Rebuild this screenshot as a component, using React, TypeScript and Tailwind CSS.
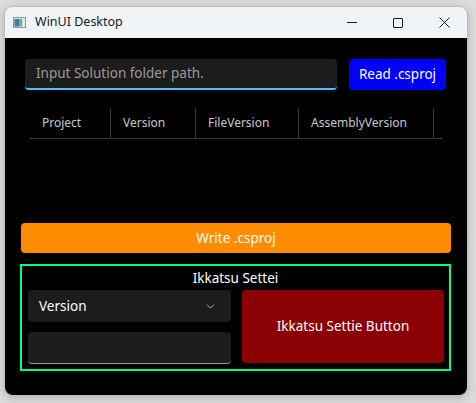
import { ChevronDown } from 'lucide-react'

const font = { fontFamily: '"Noto Sans", "Open Sans", sans-serif' }

export default function App(): JSX.Element {
  return (
    <div className="h-[403px] w-[476px] overflow-hidden bg-[#dcdcdc] pl-[5px] pt-[7px]" style={font}>
      <div className="flex h-[388px] w-[462px] flex-col overflow-hidden rounded-lg shadow-[0_0_0_1px_#bdbdbd,0_2px_10px_rgba(0,0,0,0.25)]">
        {/* Title bar */}
        <div className="flex h-[31px] flex-shrink-0 items-center bg-[#eff4f9] text-[#1a1a1a]">
          <AppIcon />
          <span className="ml-[9px] text-[12.5px]">WinUI Desktop</span>
          <div className="ml-auto flex h-full items-center">
            <div className="flex h-full w-[46px] items-center justify-center">
              <span className="block h-px w-[10px] bg-[#1a1a1a]" />
            </div>
            <div className="flex h-full w-[46px] items-center justify-center">
              <span className="block h-[10px] w-[10px] rounded-[1px] border border-[#1a1a1a]" />
            </div>
            <div className="flex h-full w-[46px] items-center justify-center">
              <svg width="11" height="11" viewBox="0 0 11 11" stroke="#1a1a1a" strokeWidth="1">
                <path d="M0.5 0.5 L10.5 10.5 M10.5 0.5 L0.5 10.5" />
              </svg>
            </div>
          </div>
        </div>

        {/* Content */}
        <div className="flex flex-1 flex-col bg-black text-white">
          {/* Path row */}
          <div className="mt-[21px] flex gap-[12px] pl-[20px]">
            <div className="flex h-[31px] w-[312px] items-center rounded-[4px] border-b-2 border-[#4cc2ff] bg-[#1c1c1c] px-[11px]">
              <span className="text-[13.5px] text-[#9a9a9a]">Input Solution folder path.</span>
            </div>
            <button className="h-[31px] w-[97px] rounded-[4px] bg-[#0000ff] text-[13.5px] text-white">
              Read .csproj
            </button>
          </div>

          {/* Table header */}
          <div className="ml-[25px] mt-[18px] flex h-[31px] w-[412px] border-b border-[#3a3a3a] text-[12px] text-[#c8c8c8]">
            <div className="flex w-[81px] items-center border-r border-[#3a3a3a] pl-[12px]">Project</div>
            <div className="flex w-[85px] items-center border-r border-[#3a3a3a] pl-[12px]">Version</div>
            <div className="flex w-[103px] items-center border-r border-[#3a3a3a] pl-[12px]">FileVersion</div>
            <div className="flex w-[135px] items-center border-r border-[#3a3a3a] pl-[12px]">AssemblyVersion</div>
          </div>

          {/* Write button */}
          <button className="ml-[16px] mt-[84px] h-[30px] w-[430px] rounded-[4px] bg-[#ff8c00] text-[13.5px] text-white">
            Write .csproj
          </button>

          {/* Ikkatsu Settei group */}
          <div className="ml-[15px] mt-[11px] flex h-[107px] w-[431px] flex-col border-2 border-[#00ff7f]">
            <div className="mt-[2px] text-center text-[13.5px] leading-[20px]">Ikkatsu Settei</div>
            <div className="mt-[2px] flex gap-[11px] pl-[6px]">
              <div className="flex w-[203px] flex-col gap-[10px]">
                <div className="flex h-[32px] items-center justify-between rounded-[4px] bg-[#1c1c1c] pl-[11px] pr-[14px]">
                  <span className="text-[13.5px]">Version</span>
                  <ChevronDown size={13} strokeWidth={1.5} className="text-[#cfcfcf]" />
                </div>
                <div className="h-[32px] rounded-[4px] border-b border-[#9a9a9a] bg-[#1c1c1c]" />
              </div>
              <button className="flex h-[73px] w-[202px] items-center justify-center rounded-[4px] bg-[#8b0000] text-[13.5px] text-white">
                Ikkatsu Settie Button
              </button>
            </div>
          </div>
        </div>
      </div>
    </div>
  )
}

function AppIcon(): JSX.Element {
  return (
    <svg width="13" height="11" viewBox="0 0 13 11" className="ml-[8px]">
      <rect x="0.5" y="0.5" width="12" height="10" fill="#dfe6ee" stroke="#8a96a3" />
      <rect x="1.5" y="2" width="5" height="7.5" fill="#3a78b8" />
      <rect x="6.5" y="2" width="3" height="7.5" fill="#6fb86a" />
      <rect x="9.5" y="2" width="2" height="7.5" fill="#e8eef3" />
    </svg>
  )
}
